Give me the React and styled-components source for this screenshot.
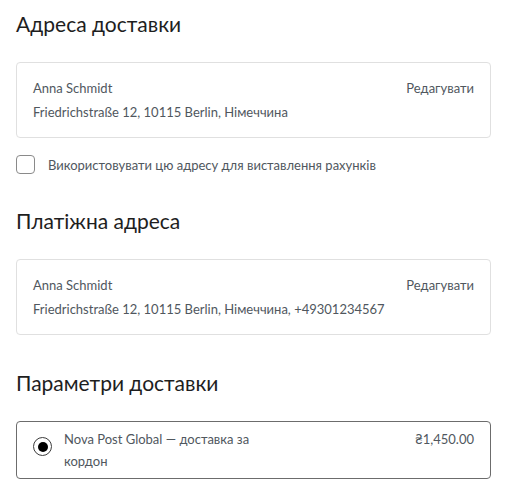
import React from "react";
import styled, { createGlobalStyle } from "styled-components";

const GlobalStyle = createGlobalStyle`
  body {
    margin: 0;
    background: #fff;
    font-family: Lato, "Noto Sans", sans-serif;
  }
`;

const Page = styled.div`
  padding: 9px 24px 0 16px;
  width: 475px;
`;

const Section = styled.section`
  margin-bottom: 33px;
`;

const Title = styled.h2`
  margin: 0 0 23px;
  font-size: 21px;
  font-weight: 400;
  line-height: 30px;
  color: #1e1e1e;
`;

const AddressCard = styled.div`
  border: 1px solid #e0e0e0;
  border-radius: 4px;
  padding: 15px 16px;
  display: flex;
  justify-content: space-between;
  align-items: flex-start;
  color: #50575e;
  font-size: 13px;
`;

const AddressText = styled.div`
  display: flex;
  flex-direction: column;
  gap: 4px;
  line-height: 20px;
`;

const Name = styled.span``;

const EditLink = styled.span`
  line-height: 20px;
`;

const CheckRow = styled.label`
  display: flex;
  align-items: center;
  gap: 13px;
  margin-top: 17px;
  margin-bottom: 32px;
  color: #50575e;
  font-size: 13px;
`;

const CheckBox = styled.span`
  width: 19px;
  height: 19px;
  border: 1px solid #8a8a8a;
  border-radius: 4px;
  box-sizing: border-box;
`;

const RateCard = styled.div`
  border: 1px solid #6c6c6c;
  border-radius: 4px;
  padding: 6px 16px;
  display: flex;
  align-items: flex-start;
  color: #50575e;
  font-size: 13px;
  line-height: 22px;
`;

const Radio = styled.span`
  width: 19px;
  height: 19px;
  margin-top: 9px;
  margin-right: 12px;
  border: 1px solid #3c3c3c;
  border-radius: 50%;
  box-sizing: border-box;
  display: flex;
  align-items: center;
  justify-content: center;
  flex-shrink: 0;

  &::after {
    content: "";
    width: 10px;
    height: 10px;
    border-radius: 50%;
    background: #000;
  }
`;

const RateLabel = styled.span`
  width: 200px;
`;

const Price = styled.span`
  margin-left: auto;
`;

const Address = ({ line }) => (
  <AddressCard>
    <AddressText>
      <Name>Anna Schmidt</Name>
      <span>{line}</span>
    </AddressText>
    <EditLink>Редагувати</EditLink>
  </AddressCard>
);

export default function App() {
  return (
    <>
      <GlobalStyle />
      <Page>
        <Title>Адреса доставки</Title>
        <Address line="Friedrichstraße 12, 10115 Berlin, Німеччина" />
        <CheckRow>
          <CheckBox />
          Використовувати цю адресу для виставлення рахунків
        </CheckRow>
        <Section>
          <Title>Платіжна адреса</Title>
          <Address line="Friedrichstraße 12, 10115 Berlin, Німеччина, +49301234567" />
        </Section>
        <Title>Параметри доставки</Title>
        <RateCard>
          <Radio />
          <RateLabel>Nova Post Global — доставка за кордон</RateLabel>
          <Price>₴1,450.00</Price>
        </RateCard>
      </Page>
    </>
  );
}
